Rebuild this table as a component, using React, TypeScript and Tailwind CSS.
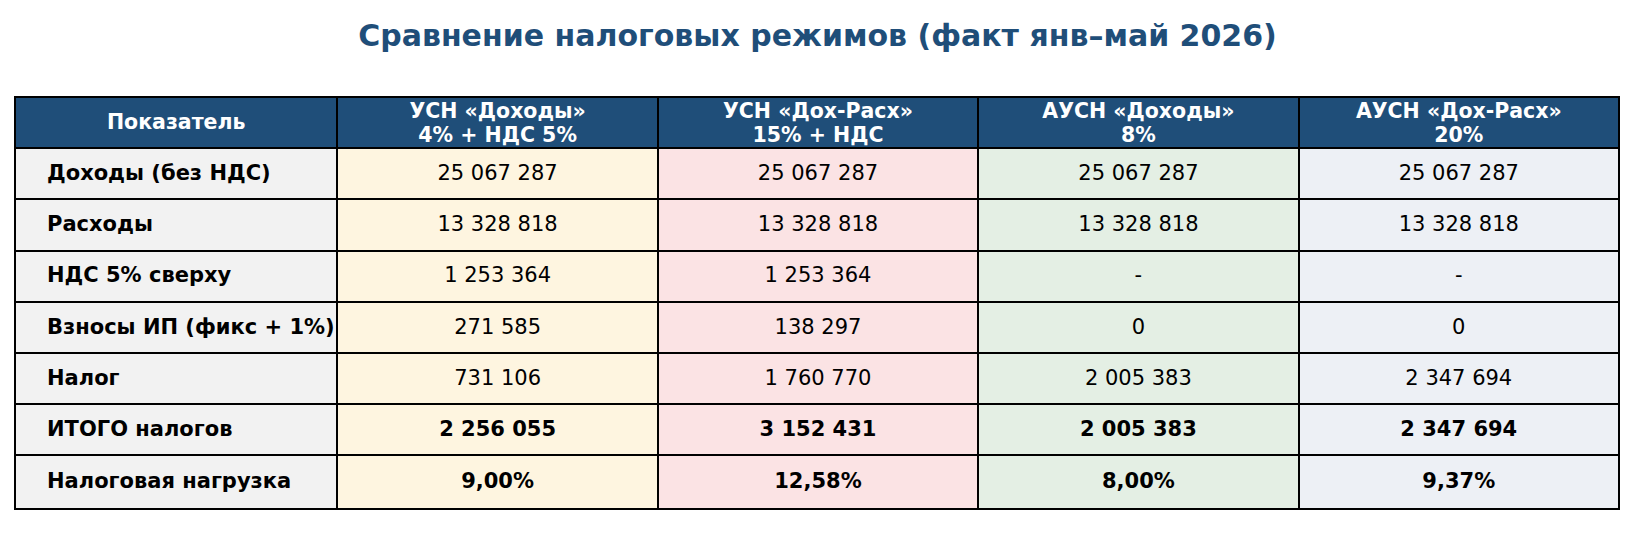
import React from "react";

type Row = {
  label: string;
  values: string[];
  bold?: boolean;
};

const columns = [
  ["УСН «Доходы»", "4% + НДС 5%"],
  ["УСН «Дох-Расх»", "15% + НДС"],
  ["АУСН «Доходы»", "8%"],
  ["АУСН «Дох-Расх»", "20%"],
];

// background per regime column
const colBg = ["bg-[#fef5e0]", "bg-[#fbe3e4]", "bg-[#e4efe4]", "bg-[#edf0f5]"];

const rows: Row[] = [
  { label: "Доходы (без НДС)", values: ["25 067 287", "25 067 287", "25 067 287", "25 067 287"] },
  { label: "Расходы", values: ["13 328 818", "13 328 818", "13 328 818", "13 328 818"] },
  { label: "НДС 5% сверху", values: ["1 253 364", "1 253 364", "-", "-"] },
  { label: "Взносы ИП (фикс + 1%)", values: ["271 585", "138 297", "0", "0"] },
  { label: "Налог", values: ["731 106", "1 760 770", "2 005 383", "2 347 694"] },
  { label: "ИТОГО налогов", values: ["2 256 055", "3 152 431", "2 005 383", "2 347 694"], bold: true },
  { label: "Налоговая нагрузка", values: ["9,00%", "12,58%", "8,00%", "9,37%"], bold: true },
];

export default function App() {
  return (
    <div
      className="w-[1635px] h-[555px] bg-white text-black"
      style={{ fontFamily: '"DejaVu Sans", sans-serif' }}
    >
      {/* Title */}
      <h1 className="h-[71px] flex items-center justify-center text-[30px] font-bold text-[#1f4e79]">
        Сравнение налоговых режимов (факт янв–май 2026)
      </h1>

      {/* Table */}
      <div className="ml-[14px] mt-[25px] w-[1606px] grid grid-cols-5 border-2 border-black">
        {/* Header */}
        <div className="h-[51.2px] flex items-center justify-center bg-[#1f4e79] text-white font-bold text-[20.5px] border-b-2 border-black">
          Показатель
        </div>
        {columns.map((c, i) => (
          <div
            key={i}
            className="h-[51.2px] flex flex-col items-center justify-center bg-[#1f4e79] text-white font-bold text-[20.5px] leading-[24px] border-b-2 border-l-2 border-black"
          >
            <span>{c[0]}</span>
            <span>{c[1]}</span>
          </div>
        ))}

        {/* Body */}
        {rows.map((r, ri) => (
          <React.Fragment key={r.label}>
            <div
              className={`h-[51.2px] flex items-center pl-[31px] bg-[#f2f2f2] font-bold text-[21px] border-black ${
                ri < rows.length - 1 ? "border-b-2" : ""
              }`}
            >
              {r.label}
            </div>
            {r.values.map((v, ci) => (
              <div
                key={ci}
                className={`h-[51.2px] flex items-center justify-center text-[21px] border-l-2 border-black ${colBg[ci]} ${
                  r.bold ? "font-bold" : ""
                } ${ri < rows.length - 1 ? "border-b-2" : ""}`}
              >
                {v}
              </div>
            ))}
          </React.Fragment>
        ))}
      </div>
    </div>
  );
}
